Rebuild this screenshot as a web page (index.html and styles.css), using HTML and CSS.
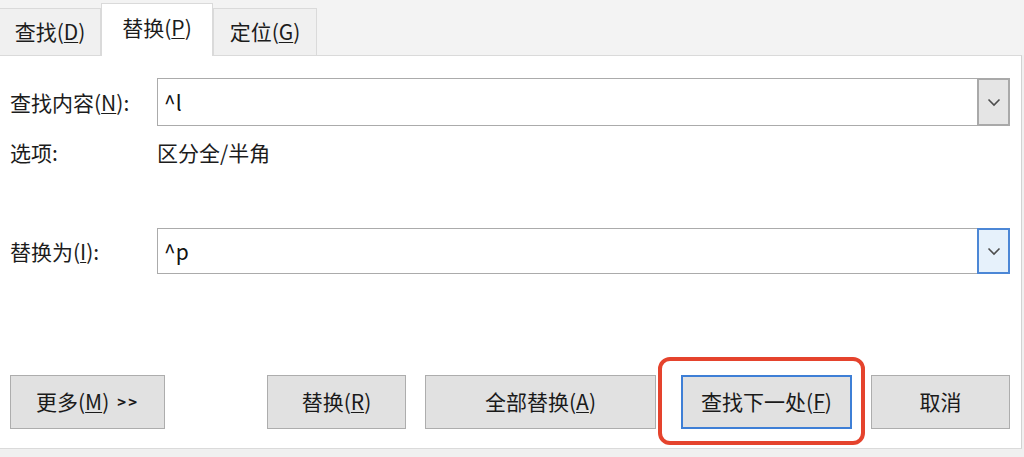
FILE: index.html
```html
<!DOCTYPE html>
<html lang="zh">
<head>
<meta charset="utf-8">
<title>查找和替换</title>
<link rel="stylesheet" href="styles.css">
</head>
<body>
<div class="dialog">
  <div class="tabs">
    <div class="tab tab-find">查找(<u>D</u>)</div>
    <div class="tab tab-active">替换(<u>P</u>)</div>
    <div class="tab tab-goto">定位(<u>G</u>)</div>
  </div>
  <div class="panel">
    <div class="row row-find">
      <div class="label">查找内容(<u>N</u>):</div>
      <div class="combo combo-find">
        <div class="combo-text">^l</div>
        <div class="combo-btn">
          <svg width="14" height="9" viewBox="0 0 14 9"><polyline points="1.5,1.5 7,7 12.5,1.5" fill="none" stroke="#4d4d4d" stroke-width="1.6"/></svg>
        </div>
      </div>
    </div>
    <div class="row row-options">
      <div class="label">选项:</div>
      <div class="options-value">区分全/半角</div>
    </div>
    <div class="row row-replace">
      <div class="label">替换为(<u>I</u>):</div>
      <div class="combo combo-replace">
        <div class="combo-text">^p</div>
        <div class="combo-btn combo-btn-active">
          <svg width="14" height="9" viewBox="0 0 14 9"><polyline points="1.5,1.5 7,7 12.5,1.5" fill="none" stroke="#4d4d4d" stroke-width="1.6"/></svg>
        </div>
      </div>
    </div>
    <div class="buttons">
      <div class="btn btn-more">更多(<u>M</u>) <span class="arrows">&gt;&gt;</span></div>
      <div class="btn btn-replace">替换(<u>R</u>)</div>
      <div class="btn btn-all">全部替换(<u>A</u>)</div>
      <div class="btn btn-next">查找下一处(<u>F</u>)<span class="highlight"></span></div>
      <div class="btn btn-cancel">取消</div>
    </div>
  </div>
</div>
</body>
</html>
```
FILE: styles.css
```css
* { box-sizing: border-box; }
html, body { margin: 0; padding: 0; background: #f0f0f0; }
body {
  font-family: "Noto Sans CJK SC", "Noto Sans", "Liberation Sans", sans-serif;
  color: #1c1c1c;
  font-size: 21px;
}
u { text-decoration: underline; text-underline-offset: 2px; text-decoration-thickness: 1px; }

.dialog {
  width: 1024px;
  height: 457px;
  background: #f0f0f0;
  display: flex;
  flex-direction: column;
}

.tabs {
  height: 55px;
  display: flex;
  align-items: flex-end;
  background: #f3f3f3;
}
.tab {
  height: 47px;
  display: flex;
  align-items: center;
  justify-content: center;
  background: #f0f0f0;
  border: 1px solid #dadada;
  border-bottom: none;
  line-height: 1;
  padding-bottom: 2px;
}
.tab-find { width: 101px; border-left: none; }
.tab-active {
  width: 112px;
  height: 53px;
  background: #fff;
  margin-bottom: -1px;
  position: relative;
  z-index: 1;
  border-color: #dadada;
  padding-bottom: 6px;
}
.tab-goto { width: 104px; }

.panel {
  width: 1022px;
  height: 394px;
  background: #fff;
  border-top: 1px solid #dadada;
  border-right: 1px solid #d2d2d2;
  border-bottom: 1px solid #dadada;
  padding: 22px 0 0 10px;
}

.row { display: flex; align-items: center; }
.label { width: 147px; line-height: 26px; }

.combo {
  width: 853px;
  height: 48px;
  border: 1px solid #ababab;
  display: flex;
  align-items: stretch;
}
.combo-replace { height: 46px; }
.combo-text {
  flex: 1;
  display: flex;
  align-items: center;
  padding-left: 6px;
  font-size: 21px;
  color: #111;
}
.combo-btn {
  width: 33px;
  margin: -1px -1px -1px 0;
  background: #e5e5e5;
  border: 2px solid #a9a9a9;
  display: flex;
  align-items: center;
  justify-content: center;
}
.combo-btn-active {
  background: #e6f1fb;
  border-color: #4c87d6;
}

.row-options { margin-top: 13px; }
.options-value { line-height: 26px; }
.row-replace { margin-top: 63px; }

.buttons {
  display: flex;
  margin-top: 101px;
}
.btn {
  height: 54px;
  background: #e1e1e1;
  border: 1px solid #adadad;
  display: flex;
  align-items: center;
  justify-content: center;
  line-height: 1;
  padding-bottom: 2px;
  color: #1a1a1a;
}
.btn-more { width: 155px; }
.arrows { font-size: 15px; margin-left: 8px; letter-spacing: 2px; font-weight: bold; }
.btn-replace { width: 139px; margin-left: 102px; }
.btn-all { width: 231px; margin-left: 19px; }
.btn-next {
  width: 171px;
  margin-left: 25px;
  border: 2px solid #3e7fd6;
  position: relative;
}
.highlight {
  position: absolute;
  left: -25px;
  right: -15px;
  top: -20px;
  bottom: -18px;
  border: 4px solid #e5432d;
  border-radius: 12px;
  pointer-events: none;
}
.btn-cancel { width: 139px; margin-left: 19px; }
```
